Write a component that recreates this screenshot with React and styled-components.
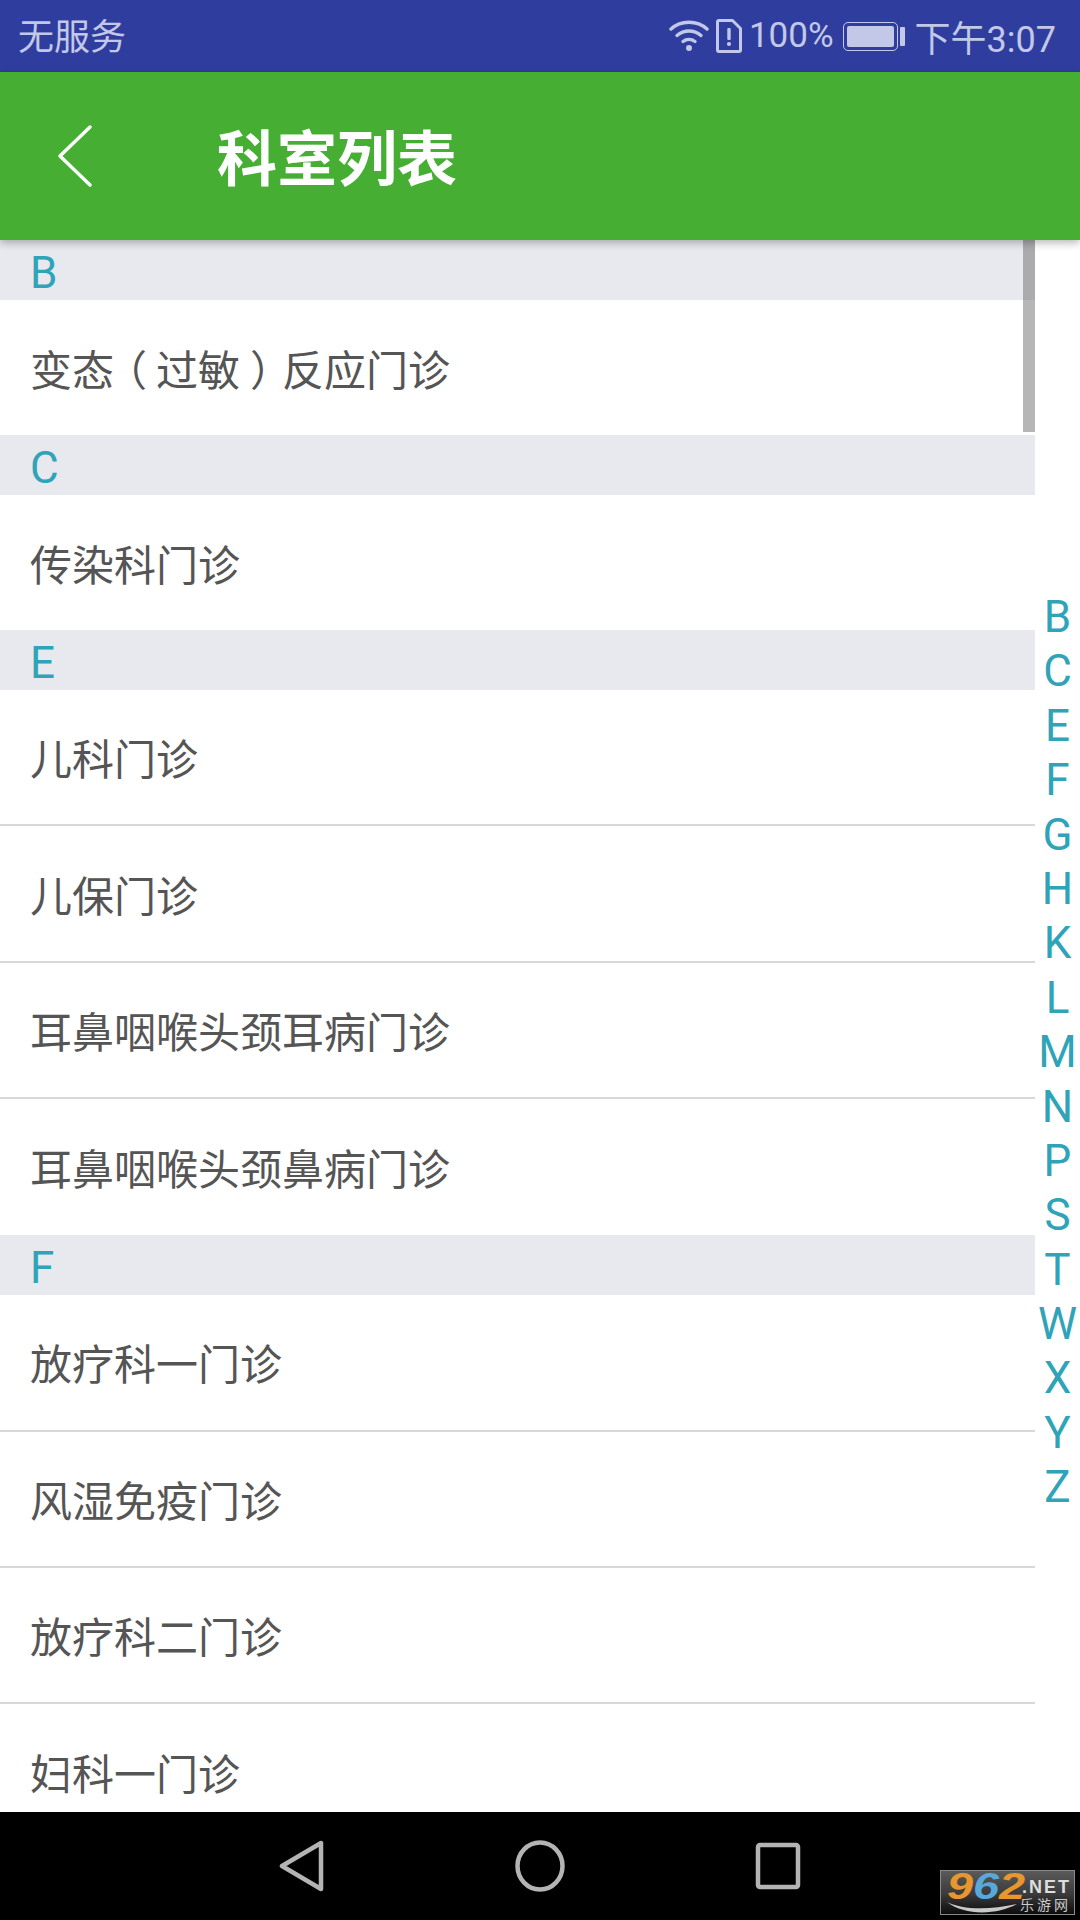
import React from "react";
import styled, { createGlobalStyle } from "styled-components";

const letters = "BCEFGHKLMNPSTWXYZ".split("");

export default function App() {
  const sections = [
    { letter: "B", items: [<>变态<Bracket $before={12} $after={9}>（</Bracket>过敏<Bracket $before={10} $after={11}>）</Bracket>反应门诊</>] },
    { letter: "C", items: ["传染科门诊"] },
    { letter: "E", items: ["儿科门诊", "儿保门诊", "耳鼻咽喉头颈耳病门诊", "耳鼻咽喉头颈鼻病门诊"] },
    { letter: "F", items: ["放疗科一门诊", "风湿免疫门诊", "放疗科二门诊", "妇科一门诊"] },
  ];

  return (
    <Page>
      <GlobalStyle />
      <StatusBar>
        <Carrier>无服务</Carrier>
        <StatusRight>
          <WifiIcon width="40" height="34" viewBox="0 0 40 34" fill="none" stroke="#c3c8e8" strokeWidth="3.4" strokeLinecap="round">
            <path d="M2 10C12 1 28 1 38 10" />
            <path d="M8 16.500C15 10.500 25 10.500 32 16.500" />
            <path d="M14 22.500C17.500 19.800 22.500 19.800 26 22.500" />
            <circle cx="20" cy="29" r="3" fill="#c3c8e8" stroke="none" />
          </WifiIcon>
          <svg width="26" height="34" viewBox="0 0 26 34" fill="none">
            <path d="M3 1.500C2.200 1.500 1.500 2.200 1.500 3V31C1.500 31.800 2.200 32.500 3 32.500H23C23.800 32.500 24.500 31.800 24.500 31V9.500L16.500 1.500Z" stroke="#c3c8e8" strokeWidth="3" strokeLinejoin="round" />
            <rect x="11.300" y="9" width="3.400" height="12" rx="1" fill="#c3c8e8" />
            <circle cx="13" cy="25" r="2.100" fill="#c3c8e8" />
          </svg>
          <Percent>100%</Percent>
          <Battery>
            <BatteryBody>
              <BatteryFill />
            </BatteryBody>
            <BatteryTip />
          </Battery>
          <Clock>下午3:07</Clock>
        </StatusRight>
      </StatusBar>

      <AppBar>
        <BackButton>
          <svg width="36" height="62" viewBox="0 0 36 62" fill="none" stroke="#fff" strokeWidth="3.400" strokeLinecap="round" strokeLinejoin="round">
            <path d="M32 2L2 31L32 60" />
          </svg>
        </BackButton>
        <Title>科室列表</Title>
      </AppBar>

      <Main>
        <ListArea>
          {sections.map((section) => (
            <section key={section.letter}>
              <SectionHeader>{section.letter}</SectionHeader>
              {section.items.map((item, i) => (
                <Row key={i} $divider={i < section.items.length - 1}>
                  {item}
                </Row>
              ))}
            </section>
          ))}
          <ScrollThumb />
        </ListArea>
        <IndexBar>
          {letters.map((l) => (
            <IndexLetter key={l}>{l}</IndexLetter>
          ))}
        </IndexBar>
      </Main>

      <NavBar>
        <svg width="46" height="52" viewBox="0 0 46 52" fill="none" stroke="#b4b4b4" strokeWidth="4.500" strokeLinejoin="round">
          <path d="M42 3V49L3 26Z" />
        </svg>
        <svg width="50" height="52" viewBox="0 0 50 52" fill="none" stroke="#b4b4b4" strokeWidth="4.500">
          <ellipse cx="25" cy="26" rx="22.500" ry="23.500" />
        </svg>
        <svg width="46" height="48" viewBox="0 0 46 48" fill="none" stroke="#b4b4b4" strokeWidth="4.500" strokeLinejoin="round">
          <rect x="3" y="3" width="40" height="42" rx="2" />
        </svg>
      </NavBar>

      <Watermark>
        <WatermarkLogo>
          <WatermarkNumber>
            9<b>6</b>2
          </WatermarkNumber>
          <Swoosh width="70" height="13" viewBox="0 0 70 13">
            <path d="M0 1C16 9 42 9 70 3C50 14 18 15 0 1Z" fill="#c8c8c8" />
          </Swoosh>
        </WatermarkLogo>
        <WatermarkSide>
          <WatermarkNet>.NET</WatermarkNet>
          <WatermarkCn>乐游网</WatermarkCn>
        </WatermarkSide>
      </Watermark>
    </Page>
  );
}

const GlobalStyle = createGlobalStyle`
  html, body {
    margin: 0;
    padding: 0;
    background: #fff;
  }
  * {
    box-sizing: border-box;
  }
`;

const Page = styled.div`
  position: relative;
  width: 1080px;
  height: 1920px;
  overflow: hidden;
  display: flex;
  flex-direction: column;
  background: #fff;
  font-family: Roboto, "Noto Sans CJK SC", sans-serif;
`;

const StatusBar = styled.div`
  height: 72px;
  flex: none;
  display: flex;
  align-items: center;
  justify-content: space-between;
  padding: 0 24px 0 18px;
  background: #2f3e9e;
  color: #c3c8e8;
`;

const Carrier = styled.div`
  font-size: 36px;
  line-height: 72px;
  padding-top: 3px;
`;

const StatusRight = styled.div`
  display: flex;
  align-items: center;
`;

const WifiIcon = styled.svg`
  margin-right: 7px;
`;

const Percent = styled.div`
  font-size: 35px;
  margin-left: 7px;
  margin-bottom: 2px;
`;

const Battery = styled.div`
  display: flex;
  align-items: center;
  margin-left: 9px;
`;

const BatteryBody = styled.div`
  width: 55px;
  height: 29px;
  padding: 3px;
  border: 1.500px solid #c3c8e8;
  border-radius: 5px;
`;

const BatteryFill = styled.div`
  width: 100%;
  height: 100%;
  background: #c3c8e8;
  border-radius: 2px;
`;

const BatteryTip = styled.div`
  width: 5px;
  height: 19px;
  margin-left: 2px;
  background: #c3c8e8;
  border-radius: 1px;
`;

const Clock = styled.div`
  font-size: 36px;
  margin-left: 10px;
  margin-bottom: 1px;
`;

const AppBar = styled.div`
  position: relative;
  z-index: 2;
  height: 168px;
  flex: none;
  display: flex;
  align-items: center;
  background: #47ae34;
  box-shadow: 0 3px 8px rgba(0, 0, 0, 0.28);
`;

const BackButton = styled.div`
  width: 217px;
  padding-left: 58px;
  display: flex;
  align-items: center;
`;

const Title = styled.div`
  font-size: 60px;
  font-weight: 700;
  color: #fff;
  margin-bottom: 4px;
`;

const Main = styled.div`
  flex: 1;
  min-height: 0;
  display: flex;
  overflow: hidden;
`;

const ListArea = styled.div`
  position: relative;
  width: 1035px;
  flex: none;
`;

const SectionHeader = styled.div`
  height: 60px;
  padding-left: 30px;
  background: #e8e8ef;
  color: #2fa4b8;
  font-size: 44px;
  line-height: 66px;
`;

const Row = styled.div`
  height: ${(p) => (p.$divider ? "136.400px" : "135px")};
  padding: 0 0 1px 30px;
  display: flex;
  align-items: center;
  font-size: 42px;
  color: #555;
  border-bottom: ${(p) => (p.$divider ? "2px solid #d8d8dc" : "none")};

  section:nth-of-type(3) &:last-child {
    height: 136px;
  }
`;

/* half-width glyph box, so the bracket can sit inside its one-em cell */
const Bracket = styled.span`
  font-feature-settings: "halt";
  margin-left: ${(p) => p.$before}px;
  margin-right: ${(p) => p.$after}px;
`;

const ScrollThumb = styled.div`
  position: absolute;
  top: 0;
  right: 0;
  width: 12px;
  height: 192px;
  background: rgba(110, 110, 110, 0.5);
`;

const IndexBar = styled.div`
  flex: 1;
  display: flex;
  flex-direction: column;
  align-items: center;
  padding-top: 350px;
`;

const IndexLetter = styled.div`
  height: 54.400px;
  font-size: 44px;
  line-height: 54px;
  color: #2fa4b8;
`;

const NavBar = styled.div`
  height: 108px;
  flex: none;
  display: flex;
  align-items: center;
  justify-content: center;
  gap: 190px;
  background: #000;
`;

const Watermark = styled.div`
  position: absolute;
  left: 940px;
  top: 1870px;
  width: 135px;
  height: 45px;
  display: flex;
  padding: 2px 0 0 6px;
  background: linear-gradient(#5a5a5a, #3a3a3a 55%, #0c0c0c);
  border: 1px solid #8a8a8a;
`;

const WatermarkLogo = styled.div`
  width: 72px;
  flex: none;
  display: flex;
  flex-direction: column;
`;

const WatermarkNumber = styled.div`
  font-family: "Liberation Sans", sans-serif;
  font-size: 36px;
  font-weight: 700;
  font-style: italic;
  line-height: 28px;
  color: #e8962e;
  transform: scaleX(1.3);
  transform-origin: left center;

  b {
    color: #57a9dc;
  }
`;

const Swoosh = styled.svg`
  display: block;
`;

const WatermarkSide = styled.div`
  display: flex;
  flex-direction: column;
  align-items: flex-end;
  width: 52px;
  padding-top: 4px;
`;

const WatermarkNet = styled.div`
  font-family: "Liberation Sans", sans-serif;
  font-size: 18px;
  font-weight: 700;
  line-height: 20px;
  letter-spacing: 2px;
  color: #ddd;
`;

const WatermarkCn = styled.div`
  font-size: 14px;
  line-height: 17px;
  letter-spacing: 3px;
  color: #ccc;
`;
